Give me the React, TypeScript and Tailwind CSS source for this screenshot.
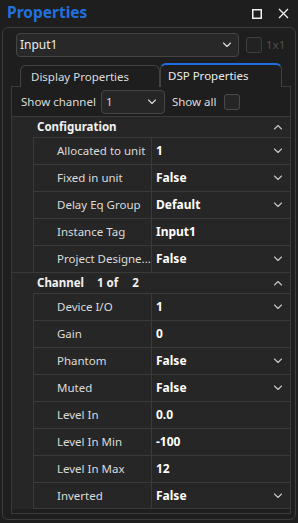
import React from "react";

const FONT = { fontFamily: "'Noto Sans', 'Open Sans', sans-serif" };

type Row = { name: string; value: string; drop?: boolean };

const configRows: Row[] = [
  { name: "Allocated to unit", value: "1", drop: true },
  { name: "Fixed in unit", value: "False", drop: true },
  { name: "Delay Eq Group", value: "Default", drop: true },
  { name: "Instance Tag", value: "Input1" },
  { name: "Project Designe...", value: "False", drop: true },
];

const channelRows: Row[] = [
  { name: "Device I/O", value: "1", drop: true },
  { name: "Gain", value: "0" },
  { name: "Phantom", value: "False", drop: true },
  { name: "Muted", value: "False", drop: true },
  { name: "Level In", value: "0.0" },
  { name: "Level In Min", value: "-100" },
  { name: "Level In Max", value: "12" },
  { name: "Inverted", value: "False", drop: true },
];

function Chevron({ up = false, className = "" }: { up?: boolean; className?: string }) {
  return (
    <svg width="10" height="6" viewBox="0 0 10 6" className={className} fill="none">
      <polyline
        points={up ? "1.5,5 5,1.5 8.5,5" : "1.5,1 5,4.5 8.5,1"}
        stroke="currentColor"
        strokeWidth="1.1"
        strokeLinecap="round"
        strokeLinejoin="round"
      />
    </svg>
  );
}

function PropRow({ row, last }: { row: Row; last?: boolean }) {
  return (
    <div className="flex h-[27px]">
      <div className="w-[21px] shrink-0" />
      <div
        className={`w-[118px] shrink-0 border-l border-t border-[#3a3a3a] flex items-center pl-[23px] text-[11.5px] text-[#dcdcdc] whitespace-nowrap overflow-hidden ${
          last ? "border-b" : ""
        }`}
      >
        {row.name}
      </div>
      <div
        className={`flex-1 border-l border-t border-[#3a3a3a] flex items-center justify-between pl-[4px] pr-[7px] text-[12px] font-bold text-white ${
          last ? "border-b" : ""
        }`}
      >
        <span>{row.value}</span>
        {row.drop && <Chevron className="text-[#c8c8c8]" />}
      </div>
    </div>
  );
}

function Category({ children, top = false }: { children: React.ReactNode; top?: boolean }) {
  return (
    <div
      className={`h-[20px] flex items-center justify-between pl-[25px] pr-[7px] text-[11.5px] font-bold text-[#f2f2f2] ${
        top ? "" : "box-content border-t border-[#3a3a3a]"
      }`}
    >
      <span className="flex items-center">{children}</span>
      <Chevron up className="text-[#c8c8c8]" />
    </div>
  );
}

export default function App() {
  return (
    <div
      className="w-[298px] h-[523px] bg-[#1e1e1e] text-[#dcdcdc] overflow-hidden select-none"
      style={FONT}
    >
      {/* ── Title bar ─────────────────────────────────── */}
      <div className="h-[27px] flex items-center justify-between pl-[7px] pr-[9px]">
        <span className="text-[15.5px] font-bold text-[#2170dc] leading-none -mt-[1px]">Properties</span>
        <div className="flex items-center gap-[16px]">
          <svg width="10" height="10" viewBox="0 0 10 10" fill="none">
            <rect x="0.75" y="0.75" width="8.5" height="8.5" stroke="#f0f0f0" strokeWidth="1.5" />
          </svg>
          <svg width="11" height="11" viewBox="0 0 11 11" fill="none">
            <path d="M1 1L10 10M10 1L1 10" stroke="#f0f0f0" strokeWidth="1.3" />
          </svg>
        </div>
      </div>

      {/* ── Frame ─────────────────────────────────────── */}
      <div className="ml-[2px] w-[294px] h-[493px] border border-[#3c3c3c] rounded-[6px] pl-[8px] pr-[4px] pt-[5px] flex flex-col">
        <div className="flex items-center ml-[5px]">
          <div className="w-[223px] h-[24px] rounded-[4px] border border-[#454545] bg-[#282828] flex items-center justify-between pl-[3px] pr-[6px] text-[12px] text-[#ececec]">
            <span>Input1</span>
            <Chevron className="text-[#e0e0e0]" />
          </div>
          <div className="ml-[7px] w-[16px] h-[16px] rounded-[3px] border border-[#3e3e3e] bg-[#222]" />
          <span className="ml-[4px] text-[11.5px] text-[#4e4e4e]">1x1</span>
        </div>

        {/* tabs */}
        <div className="flex items-end mt-[6px] ml-[9px] h-[24px] relative z-10 -mb-px">
          <div className="w-[140px] h-[22px] rounded-t-[6px] border border-b-0 border-[#424242] bg-[#1e1e1e] flex items-center pl-[10px] text-[11.5px] text-[#dcdcdc]">
            Display Properties
          </div>
          <div className="w-[122px] h-[24px] rounded-t-[6px] border border-b-0 border-[#424242] border-t-2 border-t-[#1d6fe0] bg-[#1e1e1e] flex items-center pl-[7px] text-[11.5px] text-[#ececec]">
            DSP Properties
          </div>
        </div>

        {/* panel */}
        <div className="w-[280px] h-[428px] border border-[#3a3a3a] flex flex-col">
          <div className="flex items-center pt-[3px] pb-[2px] pl-[9px] text-[11.5px] text-[#dcdcdc]">
            <span>Show channel</span>
            <div className="ml-[5px] w-[64px] h-[24px] rounded-[4px] border border-[#454545] bg-[#262626] flex items-center justify-between pl-[4px] pr-[7px]">
              <span>1</span>
              <Chevron className="text-[#d8d8d8]" />
            </div>
            <span className="ml-[7px]">Show all</span>
            <div className="ml-[8px] w-[16px] h-[16px] rounded-[3px] border border-[#4a4a4a] bg-[#262626]" />
          </div>

          {/* property grid */}
          <div className="bg-[#262626] border-t border-[#3a3a3a]">
            <Category top>Configuration</Category>
            {configRows.map((r) => (
              <PropRow key={r.name} row={r} />
            ))}
            <Category>
              <span>Channel</span>
              <span className="ml-[13px]">1 of</span>
              <span className="ml-[14px]">2</span>
            </Category>
            {channelRows.map((r, i) => (
              <PropRow key={r.name} row={r} last={i === channelRows.length - 1} />
            ))}
          </div>
        </div>
      </div>
    </div>
  );
}
